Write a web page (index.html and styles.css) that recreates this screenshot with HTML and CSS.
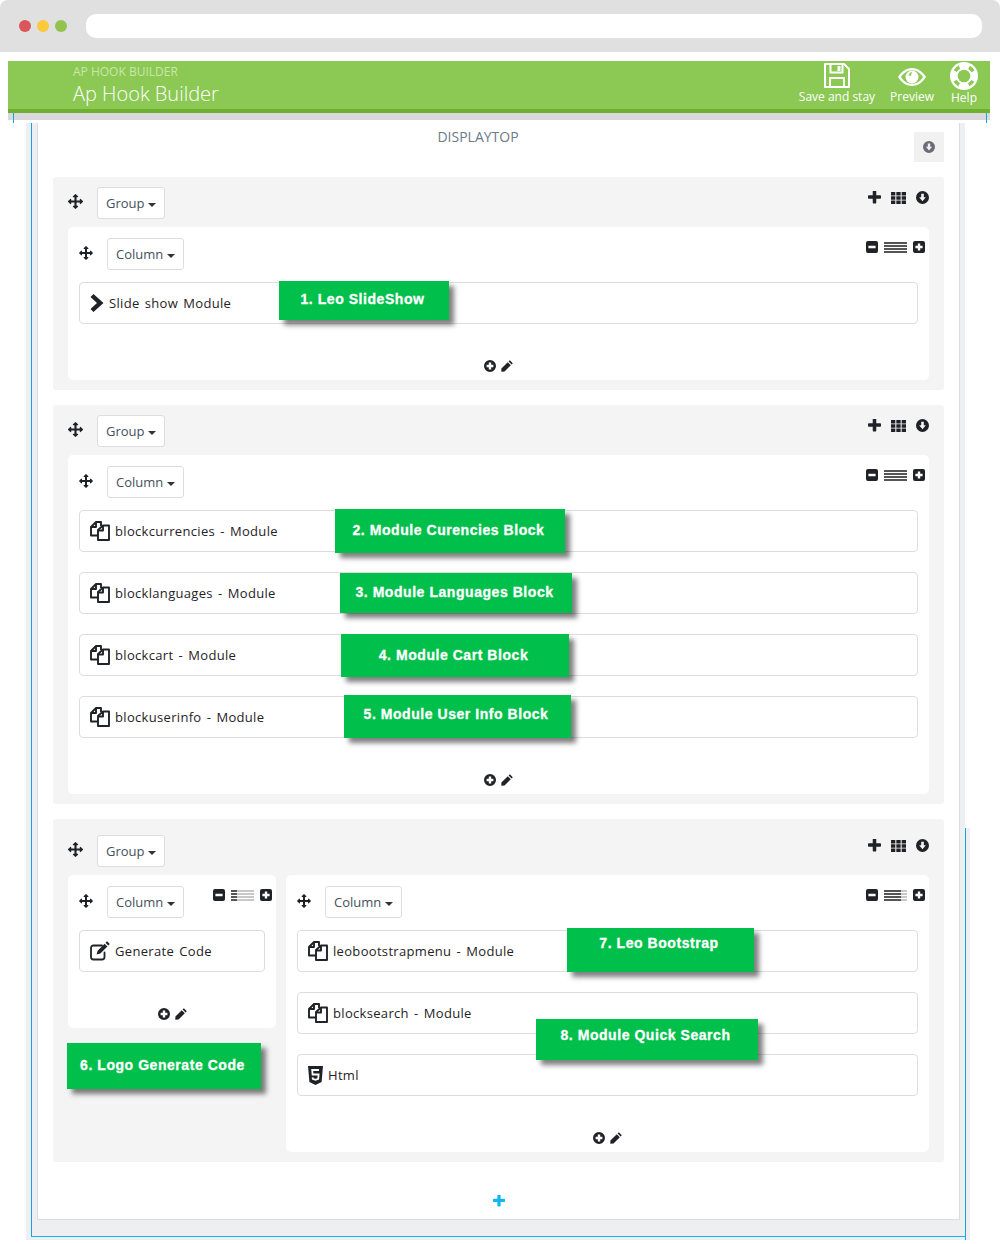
FILE: index.html
```html
<!DOCTYPE html>
<html lang="en">
<head>
    <meta charset="utf-8" />
    <meta name="viewport" content="width=device-width, initial-scale=1.0">
    <link rel="stylesheet" href="styles.css">
    <title>Ap Hook Builder</title>
</head>
<body>
    <svg class="sprite" xmlns="http://www.w3.org/2000/svg">
        <symbol id="i-move" viewBox="0 0 1792 1792"><path d="M1792 896q0 26-19 45l-256 256q-19 19-45 19t-45-19-19-45v-128h-384v384h128q26 0 45 19t19 45-19 45l-256 256q-19 19-45 19t-45-19l-256-256q-19-19-19-45t19-45 45-19h128v-384h-384v128q0 26-19 45t-45 19-45-19l-256-256q-19-19-19-45t19-45l256-256q19-19 45-19t45 19 19 45v128h384v-384h-128q-26 0-45-19t-19-45 19-45l256-256q19-19 45-19t45 19l256 256q19 19 19 45t-19 45-45 19h-128v384h384v-128q0-26 19-45t45-19 45 19l256 256q19 19 19 45z"/></symbol>
        <symbol id="i-plus" viewBox="192 192 1408 1408"><path d="M1600 736v192q0 40-28 68t-68 28h-416v416q0 40-28 68t-68 28h-192q-40 0-68-28t-28-68v-416h-416q-40 0-68-28t-28-68v-192q0-40 28-68t68-28h416v-416q0-40 28-68t68-28h192q40 0 68 28t28 68v416h416q40 0 68 28t28 68z"/></symbol>
        <symbol id="i-chevron" viewBox="0 0 14 18"><path d="M3.500 0L13.500 9L3.500 18L0.500 15L7 9L0.500 3Z"/></symbol>
        <symbol id="i-th" viewBox="0 0 15 12"><path d="M0 0h4.300v3.500H0zM5.350 0h4.300v3.500h-4.300zM10.700 0H15v3.500h-4.300zM0 4.250h4.300v3.500H0zM5.350 4.250h4.300v3.500h-4.300zM10.700 4.250H15v3.500h-4.300zM0 8.500h4.300V12H0zM5.350 8.500h4.300V12h-4.300zM10.700 8.500H15V12h-4.300z"/></symbol>
        <symbol id="i-down" viewBox="0 0 14 14"><path fill-rule="evenodd" d="M7 0a7 7 0 1 1 0 14A7 7 0 0 1 7 0zM5.600 3v3.600H3.400L7 11l3.600-4.400H8.400V3z"/></symbol>
        <symbol id="i-circle-plus" viewBox="0 0 12 12"><path fill-rule="evenodd" d="M6 0a6 6 0 1 1 0 12A6 6 0 0 1 6 0zM4.800 2.600v2.200H2.600v2.400h2.200v2.200h2.400V7.200h2.200V4.800H7.200V2.600z"/></symbol>
        <symbol id="i-pencil" viewBox="0 0 12 12"><path d="M8.800 0.200l3 3-1.200 1.200-3-3zM6.800 2.200l3 3L3.500 11.600 0.300 11.800 0.400 8.500z"/></symbol>
        <symbol id="i-minus-sq" viewBox="0 0 12 12"><path fill-rule="evenodd" d="M2 0h8a2 2 0 0 1 2 2v8a2 2 0 0 1-2 2H2a2 2 0 0 1-2-2V2a2 2 0 0 1 2-2zM2.400 4.800v2.400h7.200V4.800z"/></symbol>
        <symbol id="i-plus-sq" viewBox="0 0 12 12"><path fill-rule="evenodd" d="M2 0h8a2 2 0 0 1 2 2v8a2 2 0 0 1-2 2H2a2 2 0 0 1-2-2V2a2 2 0 0 1 2-2zM4.800 2.400v2.400H2.400v2.400h2.400v2.400h2.400V7.200h2.400V4.800H7.200V2.400z"/></symbol>
        <symbol id="i-files" viewBox="0 0 20 20"><g fill="none" stroke="currentColor" stroke-width="1.900" stroke-linejoin="round"><path d="M8 14.500H1V6l5-5h5v4"/><path d="M6 1v5H1"/><path d="M8 19V9l5-4.500h6V19z"/><path d="M13 5v4.500H8"/></g></symbol>
        <symbol id="i-edit" viewBox="0 0 20 20"><path fill="none" stroke="currentColor" stroke-width="1.800" stroke-linecap="round" d="M14.500 11.500V16a2.500 2.500 0 0 1-2.500 2.500H3.500A2.500 2.500 0 0 1 1 16V7a2.500 2.500 0 0 1 2.500-2.500H12"/><path d="M17 0.300l2.800 2.800-1.500 1.500-2.800-2.800zM14.600 2.700l2.800 2.800-7 7-3.800 1 1-3.800z"/></symbol>
        <symbol id="i-html5" viewBox="0 0 15 19"><path d="M0 0h15l-1.400 16L7.500 19 1.400 16z"/><path fill="none" stroke="#fff" stroke-width="1.800" d="M11 4H4.200l0.400 4.500H10.600l-0.400 4.300-2.700 1-2.700-1-0.200-1.500"/></symbol>
        <symbol id="i-save" viewBox="0 0 26 25"><path fill="none" stroke="#fff" stroke-width="2" stroke-linejoin="round" d="M1 1h19l5 5v18H1z"/><path fill="none" stroke="#fff" stroke-width="2" d="M6.500 1.500v8h12v-8M6 24v-9h14v9"/><path fill="#fff" d="M13.500 3h3v5h-3z"/></symbol>
        <symbol id="i-eye" viewBox="0 0 28 18"><path fill="#fff" fill-rule="evenodd" d="M14 0c6 0 11 4 14 9-3 5-8 9-14 9S3 14 0 9c3-5 8-9 14-9zM14 2.200C9.500 2.200 5.500 5 3 9c2.500 4 6.500 6.800 11 6.800S22.500 13 25 9c-2.500-4-6.500-6.800-11-6.800z"/><circle fill="#fff" cx="14" cy="9" r="6.500"/><path fill="#8bc954" d="M10.500 7.500c0.500-2 2-3.300 4-3.500-1 1-1.500 2.500-1.500 4-1-0.500-1.800-0.700-2.500-0.500z"/></symbol>
        <symbol id="i-help" viewBox="0 0 28 28"><circle cx="14" cy="14" r="14" fill="#fff"/><circle cx="14" cy="14" r="10" fill="none" stroke="#8bc954" stroke-width="3.500" stroke-dasharray="5.700 10" stroke-dashoffset="-5"/><circle cx="14" cy="14" r="6.300" fill="#8bc954"/></symbol>
    </svg>

    <div class="browser-bar">
        <span class="dot dot-red"></span>
        <span class="dot dot-yellow"></span>
        <span class="dot dot-green"></span>
        <div class="address"></div>
    </div>

    <div class="admin-head">
        <div class="head-title">
            <div class="crumb">AP HOOK BUILDER</div>
            <h1>Ap Hook Builder</h1>
        </div>
        <div class="head-tools">
            <a class="tool tool-save"><svg><use href="#i-save"/></svg><span>Save and stay</span></a>
            <a class="tool tool-preview"><svg><use href="#i-eye"/></svg><span>Preview</span></a>
            <a class="tool tool-help"><svg><use href="#i-help"/></svg><span>Help</span></a>
        </div>
    </div>
    <div class="head-strip"></div>

    <div class="frame">
        <div class="frame-line">
            <div class="hook">
                <div class="hook-head">
                    <div class="hook-title">DISPLAYTOP</div>
                    <div class="hook-toggle"><svg class="ico-12"><use href="#i-down"/></svg></div>
                </div>

                <div class="group">
                    <div class="group-head">
                        <svg class="ico-move"><use href="#i-move"/></svg>
                        <div class="drop">Group <i class="caret"></i></div>
                        <div class="group-tools">
                            <svg class="ico-plus"><use href="#i-plus"/></svg>
                            <svg class="ico-th"><use href="#i-th"/></svg>
                            <svg class="ico-down"><use href="#i-down"/></svg>
                        </div>
                    </div>
                    <div class="columns">
                        <div class="column">
                            <div class="column-head">
                                <svg class="ico-move-sm"><use href="#i-move"/></svg>
                                <div class="drop">Column <i class="caret"></i></div>
                                <div class="column-tools">
                                    <svg class="ico-12"><use href="#i-minus-sq"/></svg>
                                    <div class="bars"></div>
                                    <svg class="ico-12"><use href="#i-plus-sq"/></svg>
                                </div>
                            </div>
                            <div class="widgets">
                                <div class="widget"><svg class="ico-chevron"><use href="#i-chevron"/></svg>Slide show Module</div>
                            </div>
                            <div class="column-foot">
                                <svg class="ico-12"><use href="#i-circle-plus"/></svg>
                                <svg class="ico-12"><use href="#i-pencil"/></svg>
                            </div>
                        </div>
                    </div>
                </div>

                <div class="group">
                    <div class="group-head">
                        <svg class="ico-move"><use href="#i-move"/></svg>
                        <div class="drop">Group <i class="caret"></i></div>
                        <div class="group-tools">
                            <svg class="ico-plus"><use href="#i-plus"/></svg>
                            <svg class="ico-th"><use href="#i-th"/></svg>
                            <svg class="ico-down"><use href="#i-down"/></svg>
                        </div>
                    </div>
                    <div class="columns">
                        <div class="column">
                            <div class="column-head">
                                <svg class="ico-move-sm"><use href="#i-move"/></svg>
                                <div class="drop">Column <i class="caret"></i></div>
                                <div class="column-tools">
                                    <svg class="ico-12"><use href="#i-minus-sq"/></svg>
                                    <div class="bars"></div>
                                    <svg class="ico-12"><use href="#i-plus-sq"/></svg>
                                </div>
                            </div>
                            <div class="widgets">
                                <div class="widget"><svg class="ico-20"><use href="#i-files"/></svg>blockcurrencies - Module</div>
                                <div class="widget"><svg class="ico-20"><use href="#i-files"/></svg>blocklanguages - Module</div>
                                <div class="widget"><svg class="ico-20"><use href="#i-files"/></svg>blockcart - Module</div>
                                <div class="widget"><svg class="ico-20"><use href="#i-files"/></svg>blockuserinfo - Module</div>
                            </div>
                            <div class="column-foot">
                                <svg class="ico-12"><use href="#i-circle-plus"/></svg>
                                <svg class="ico-12"><use href="#i-pencil"/></svg>
                            </div>
                        </div>
                    </div>
                </div>

                <div class="group group-last">
                    <div class="group-head">
                        <svg class="ico-move"><use href="#i-move"/></svg>
                        <div class="drop">Group <i class="caret"></i></div>
                        <div class="group-tools">
                            <svg class="ico-plus"><use href="#i-plus"/></svg>
                            <svg class="ico-th"><use href="#i-th"/></svg>
                            <svg class="ico-down"><use href="#i-down"/></svg>
                        </div>
                    </div>
                    <div class="columns">
                        <div class="column column-side">
                            <div class="column-head">
                                <svg class="ico-move-sm"><use href="#i-move"/></svg>
                                <div class="drop">Column <i class="caret"></i></div>
                                <div class="column-tools">
                                    <svg class="ico-12"><use href="#i-minus-sq"/></svg>
                                    <div class="bars bars-light"><div class="bars-fill fill-quarter"></div></div>
                                    <svg class="ico-12"><use href="#i-plus-sq"/></svg>
                                </div>
                            </div>
                            <div class="widgets">
                                <div class="widget"><svg class="ico-20"><use href="#i-edit"/></svg>Generate Code</div>
                            </div>
                            <div class="column-foot">
                                <svg class="ico-12"><use href="#i-circle-plus"/></svg>
                                <svg class="ico-12"><use href="#i-pencil"/></svg>
                            </div>
                        </div>
                        <div class="column">
                            <div class="column-head">
                                <svg class="ico-move-sm"><use href="#i-move"/></svg>
                                <div class="drop">Column <i class="caret"></i></div>
                                <div class="column-tools">
                                    <svg class="ico-12"><use href="#i-minus-sq"/></svg>
                                    <div class="bars bars-light"><div class="bars-fill fill-most"></div></div>
                                    <svg class="ico-12"><use href="#i-plus-sq"/></svg>
                                </div>
                            </div>
                            <div class="widgets">
                                <div class="widget"><svg class="ico-20"><use href="#i-files"/></svg>leobootstrapmenu - Module</div>
                                <div class="widget"><svg class="ico-20"><use href="#i-files"/></svg>blocksearch - Module</div>
                                <div class="widget"><svg class="ico-html5"><use href="#i-html5"/></svg>Html</div>
                            </div>
                            <div class="column-foot">
                                <svg class="ico-12"><use href="#i-circle-plus"/></svg>
                                <svg class="ico-12"><use href="#i-pencil"/></svg>
                            </div>
                        </div>
                    </div>
                </div>

                <div class="add-group"><svg class="ico-add"><use href="#i-plus"/></svg></div>
            </div>
        </div>
    </div>

    <div class="note note-1">1. Leo SlideShow</div>
    <div class="note note-2">2. Module Curencies Block</div>
    <div class="note note-3">3. Module Languages Block</div>
    <div class="note note-4">4. Module Cart Block</div>
    <div class="note note-5">5. Module User Info Block</div>
    <div class="note note-6">6. Logo Generate Code</div>
    <div class="note note-7">7. Leo Bootstrap</div>
    <div class="note note-8">8. Module Quick Search</div>
</body>
</html>
```

FILE: styles.css
```css
* {
    box-sizing: border-box;
}

body {
    margin: 0;
    position: relative;
    height: 1244px;
    overflow: hidden;
    background-color: white;
    font-family: 'Open Sans', sans-serif;
    font-size: 13px;
    color: #1f2226;
}

.sprite {
    display: none;
}

svg {
    display: block;
    flex: none;
    fill: currentColor;
}

/* browser chrome */
.browser-bar {
    width: 1000px;
    height: 52px;
    margin-bottom: 9px;
    padding: 14px 18px 0 19px;
    display: flex;
    background-color: #e0e0e0;
    border-radius: 8px 8px 0 0;
}

.dot {
    width: 12px;
    height: 12px;
    margin: 6px 6px 0 0;
    border-radius: 50%;
}

.dot-red { background-color: #d9575a; }
.dot-yellow { background-color: #fbc93a; }
.dot-green { background-color: #94c24f; }

.address {
    flex: 1;
    height: 24px;
    margin-left: 13px;
    background-color: white;
    border-radius: 10px;
}

/* green header */
.admin-head {
    width: 982px;
    height: 52px;
    margin-left: 8px;
    padding: 0 12px 0 65px;
    display: flex;
    justify-content: space-between;
    background-color: #8bc954;
    border-bottom: 4px solid #6fb12f;
    color: white;
}

.crumb {
    margin-top: 3px;
    font-size: 12px;
    line-height: 15px;
    color: #cbe6a8;
}

.head-title h1 {
    margin: 1px 0 0;
    font-size: 20px;
    font-weight: 300;
    line-height: 28px;
}

.head-tools {
    display: flex;
}

.tool {
    display: flex;
    flex-direction: column;
    align-items: center;
    font-size: 12px;
    line-height: 16px;
    white-space: nowrap;
}

.tool span {
    margin-top: auto;
    margin-bottom: 4px;
}

.tool-save svg { width: 26px; height: 25px; margin-top: 2px; }
.tool-preview { margin-left: 15px; }
.tool-preview svg { width: 28px; height: 18px; margin-top: 7px; }
.tool-help { margin-left: 16px; }
.tool-help svg { width: 28px; height: 28px; margin-top: 1px; }

.head-strip {
    width: 982px;
    height: 7px;
    margin-left: 8px;
    position: relative;
    background-color: #d9d8dc;
}

.head-strip::before,
.head-strip::after {
    content: "";
    position: absolute;
    top: 0;
    height: 10px;
    border-left: 1px solid #12a5e0;
}

.head-strip::before { left: 5px; }
.head-strip::after { right: 3px; }

/* page frame */
.frame {
    width: 939px;
    margin: 3px 0 0 26px;
    padding: 0 0 3px 5px;
    position: relative;
    background-color: #eeeff1;
}

.frame::after {
    content: "";
    position: absolute;
    left: 939px;
    top: 705px;
    bottom: 0;
    width: 4px;
    background-color: #eeeff1;
    border-left: 1px solid #12a5e0;
}

.frame-line {
    padding: 0 5px 16px 5px;
    border-left: 1px solid #1a9fd9;
    border-bottom: 1px solid #0fb4f2;
}

.hook {
    height: 1097px;
    padding: 9px 15px 0;
    background-color: white;
    border: 1px solid #dcdcdc;
    border-top: none;
}

.hook-head {
    display: flex;
    margin-bottom: 15px;
}

.hook-title {
    flex: 1;
    padding-right: 11px;
    text-align: center;
    font-size: 14px;
    line-height: 9px;
    color: #6c7a89;
}

.hook-toggle {
    width: 30px;
    height: 30px;
    display: flex;
    align-items: center;
    justify-content: center;
    background-color: #f1f1f1;
    color: #6c6c78;
}

/* groups */
.group {
    margin-bottom: 15px;
    padding: 10px 15px;
    background-color: #f4f4f4;
    border-radius: 3px;
}

.group-last {
    padding-top: 16px;
}

.group-head {
    display: flex;
    align-items: flex-start;
    margin-bottom: 8px;
}

.group-head .drop {
    gap: 3px;
}

.ico-move {
    width: 15px;
    height: 15px;
    margin: 7px 14px 0 0;
}

.ico-move-sm {
    width: 14px;
    height: 14px;
    margin: 8px 14px 0 0;
}

.group-tools {
    margin: 4px 0 0 auto;
    display: flex;
    align-items: center;
    gap: 10px;
}

.ico-plus { width: 13px; height: 13px; }
.ico-th { width: 15px; height: 12px; }
.ico-down { width: 13px; height: 13px; }
.ico-12 { width: 12px; height: 12px; }
.ico-20 { width: 20px; height: 20px; }
.ico-chevron { width: 14px; height: 18px; }
.ico-html5 { width: 15px; height: 19px; margin-top: 1px; }
.ico-add { width: 12px; height: 12px; color: #12b5f0; }

.drop {
    height: 32px;
    padding: 0 8px;
    display: flex;
    align-items: center;
    gap: 4px;
    background-color: white;
    border: 1px solid #dddddd;
    border-radius: 3px;
    color: #45505a;
}

.caret {
    width: 0;
    height: 0;
    margin-top: 3px;
    border-top: 4px solid #333;
    border-left: 4px solid transparent;
    border-right: 4px solid transparent;
}

.columns {
    display: flex;
    align-items: flex-start;
    gap: 10px;
}

.column {
    flex: 1;
    padding: 11px 11px 8px;
    background-color: white;
    border-radius: 5px;
}

.column-side {
    flex: none;
    width: 208px;
}

.column-head {
    display: flex;
    align-items: flex-start;
    margin-bottom: 12px;
}

.column-tools {
    margin: 3px -7px 0 auto;
    display: flex;
    align-items: center;
    gap: 6px;
}

.bars {
    width: 23px;
    height: 11px;
    background-image: repeating-linear-gradient(#555 0, #555 2px, transparent 2px, transparent 3px);
}

.bars-light {
    background-image: repeating-linear-gradient(#c8c8c8 0, #c8c8c8 2px, transparent 2px, transparent 3px);
}

.bars-fill {
    height: 11px;
    background-image: repeating-linear-gradient(#555 0, #555 2px, transparent 2px, transparent 3px);
}

.fill-quarter { width: 6px; }
.fill-most { width: 17px; }

.widgets {
    display: flex;
    flex-direction: column;
    gap: 20px;
}

.widget {
    height: 42px;
    padding-left: 10px;
    display: flex;
    align-items: center;
    gap: 5px;
    border: 1px solid #dddddd;
    border-radius: 4px;
    word-spacing: 1.500px;
    letter-spacing: 0.320px;
}

.column-foot {
    margin-top: 36px;
    display: flex;
    justify-content: center;
    gap: 5px;
}

.add-group {
    margin-top: 33px;
    display: flex;
    justify-content: center;
}

/* green notes laid over the builder */
.note {
    position: absolute;
    padding-right: 3px;
    background-color: #00c04b;
    box-shadow: 5px 5px 5px rgba(0, 0, 0, 0.5);
    color: white;
    font-family: 'Liberation Sans', sans-serif;
    font-size: 14px;
    font-weight: bold;
    letter-spacing: 0.550px;
    -webkit-text-stroke: 0.300px white;
    text-align: center;
    white-space: nowrap;
}

.note-1 { left: 279px; top: 281px; width: 170px; height: 39px; padding-top: 10px; }
.note-2 { left: 335px; top: 509px; width: 230px; height: 44px; padding-top: 13px; }
.note-3 { left: 340px; top: 573px; width: 232px; height: 40px; padding-top: 11px; }
.note-4 { left: 341px; top: 634px; width: 228px; height: 43px; padding-top: 13px; }
.note-5 { left: 344px; top: 695px; width: 227px; height: 43px; padding-top: 11px; }
.note-6 { left: 67px; top: 1043px; width: 194px; height: 46px; padding-top: 14px; }
.note-7 { left: 567px; top: 928px; width: 187px; height: 44px; padding-top: 7px; }
.note-8 { left: 536px; top: 1019px; width: 222px; height: 41px; padding-top: 8px; }
```
